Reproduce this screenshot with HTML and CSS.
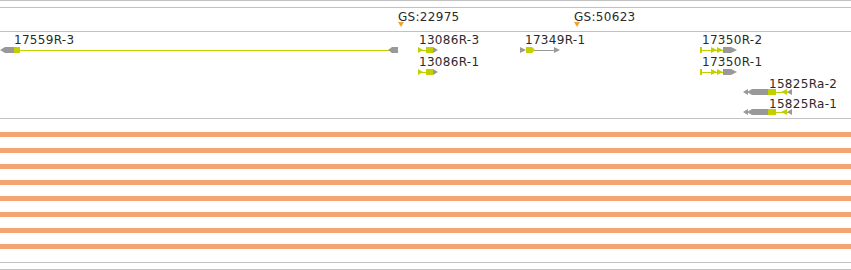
FILE: index.html
```html
<!DOCTYPE html>
<html>
<head>
	<meta charset="utf-8">
	<meta name="viewport" content="width=device-width, initial-scale=1">
	<title>Tracks</title>
	<link rel="stylesheet" href="styles.css">
</head>
<body>
	<div class="rule"></div>
	<div class="spacer"></div>
	<div class="rule"></div>

	<!-- marker track -->
	<svg class="track markers" width="851" height="23" viewBox="0 8 851 23">
		<text x="398" y="21">GS:22975</text>
		<polygon class="tri" points="398,22 404,22 401,27"/>
		<text x="574" y="21">GS:50623</text>
		<polygon class="tri" points="574,22 580,22 577,27"/>
	</svg>
	<div class="rule"></div>

	<!-- gene track, features placed by coordinate -->
	<svg class="track genes" width="851" height="86" viewBox="0 32 851 86">
		<!-- 17559R-3 -->
		<text x="14" y="44">17559R-3</text>
		<line class="gl" x1="20" y1="50.5" x2="390" y2="50.5"/>
		<polygon class="grey" points="0,50 5,47 14,47 14,53 5,53"/>
		<rect class="green" x="14" y="47" width="6" height="6"/>
		<polygon class="grey" points="388,50 392,47 398,47 398,53 392,53"/>

		<!-- 13086R-3 -->
		<text x="419" y="44">13086R-3</text>
		<line class="gl" x1="418" y1="50.5" x2="427" y2="50.5"/>
		<polygon class="green" points="418,47 423,50 418,53"/>
		<rect class="green" x="426" y="47" width="7" height="6"/>
		<polygon class="grey" points="433,47 438,50 433,53"/>

		<!-- 13086R-1 -->
		<text x="419" y="66">13086R-1</text>
		<line class="gl" x1="418" y1="72.5" x2="427" y2="72.5"/>
		<polygon class="green" points="418,69 423,72 418,75"/>
		<rect class="green" x="426" y="69" width="7" height="6"/>
		<polygon class="grey" points="433,69 438,72 433,75"/>

		<!-- 17349R-1 -->
		<text x="525" y="44">17349R-1</text>
		<line class="ll" x1="534" y1="50.5" x2="555" y2="50.5"/>
		<polygon class="grey" points="520,47 526,50 520,53"/>
		<polygon class="green" points="526,47 532,47 535,50 532,53 526,53"/>
		<polygon class="grey" points="554,47 560,50 554,53"/>

		<!-- 17350R-2 -->
		<text x="702" y="44">17350R-2</text>
		<line class="gl" x1="700" y1="50.5" x2="725" y2="50.5"/>
		<rect class="green" x="700" y="47" width="2" height="6"/>
		<polygon class="green" points="711,47 717,50 711,53"/>
		<polygon class="green" points="717,47 723,50 717,53"/>
		<polygon class="grey" points="723,47 731,47 737,50 731,53 723,53"/>

		<!-- 17350R-1 -->
		<text x="702" y="66">17350R-1</text>
		<line class="gl" x1="700" y1="72.5" x2="725" y2="72.5"/>
		<rect class="green" x="700" y="69" width="2" height="6"/>
		<polygon class="green" points="711,69 717,72 711,75"/>
		<polygon class="green" points="717,69 723,72 717,75"/>
		<polygon class="grey" points="723,69 731,69 737,72 731,75 723,75"/>

		<!-- 15825Ra-2 -->
		<text x="769" y="88">15825Ra-2</text>
		<line class="gl" x1="776" y1="92.5" x2="790" y2="92.5"/>
		<polygon class="grey" points="743,92 748,89 748,95"/>
		<polygon class="grey" points="747,92 752,89 768,89 768,95 752,95"/>
		<rect class="green" x="768" y="89" width="8" height="6"/>
		<polygon class="green" points="781,92 787,89 787,95"/>
		<polygon class="grey" points="787,92 792,89 792,95"/>

		<!-- 15825Ra-1 -->
		<text x="769" y="108">15825Ra-1</text>
		<line class="gl" x1="776" y1="112.5" x2="790" y2="112.5"/>
		<polygon class="grey" points="743,112 748,109 748,115"/>
		<polygon class="grey" points="747,112 752,109 768,109 768,115 752,115"/>
		<rect class="green" x="768" y="109" width="8" height="6"/>
		<polygon class="green" points="781,112 787,109 787,115"/>
		<polygon class="grey" points="787,112 792,109 792,115"/>
	</svg>
	<div class="rule"></div>

	<div class="bars">
		<div class="bar"></div>
		<div class="bar"></div>
		<div class="bar"></div>
		<div class="bar"></div>
		<div class="bar"></div>
		<div class="bar"></div>
		<div class="bar"></div>
		<div class="bar"></div>
	</div>
	<div class="rule"></div>
	<div class="spacer"></div>
	<div class="rule"></div>
</body>
</html>
```

FILE: styles.css
```css
body{margin: 0; background: white; width: 851px; overflow: hidden;}
.rule{height: 1px; background: #c2c2c2;}
.spacer{height: 6px;}
.track{display: block;}
.track text{font-family: "DejaVu Sans", sans-serif; font-size: 12px; letter-spacing: 0.3px; fill: #2a2a2a;}
.tri{fill: #f2a23c;}
.green{fill: #c2d000;}
.grey{fill: #999;}
.gl{stroke: #c2d000; stroke-width: 1;}
.ll{stroke: #999; stroke-width: 1;}
.bars{
	display: flex; flex-direction: column; gap: 11px;
	padding: 13px 0;
}
.bar{height: 5px; background: #f5a571;}
```
